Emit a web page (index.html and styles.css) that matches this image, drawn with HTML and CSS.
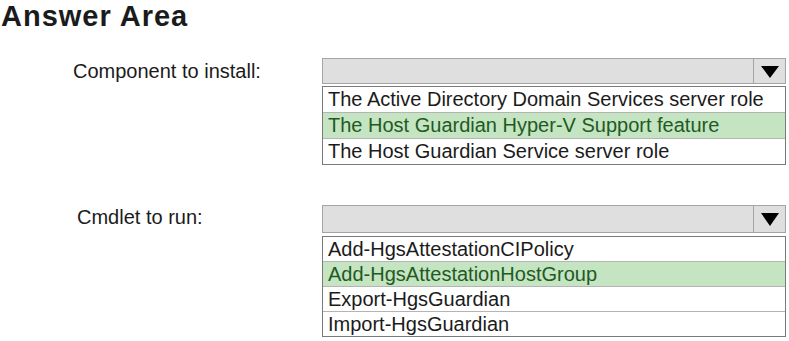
FILE: index.html
```html
<!DOCTYPE html>
<html lang="en">
<head>
<meta charset="UTF-8">
<meta name="viewport" content="width=device-width, initial-scale=1.0">
<title>Answer Area</title>
<link rel="stylesheet" href="styles.css">
</head>
<body>
    <h1 class="title">Answer Area</h1>

    <div class="question">
        <div class="label">Component to install:</div>
        <div class="dropdown">
            <div class="dropdown-head">
                <div class="dropdown-value"></div>
                <div class="dropdown-arrow"><span class="triangle"></span></div>
            </div>
            <ul class="dropdown-list">
                <li class="option">The Active Directory Domain Services server role</li>
                <li class="option option-selected">The Host Guardian Hyper-V Support feature</li>
                <li class="option">The Host Guardian Service server role</li>
            </ul>
        </div>
    </div>

    <div class="question question-second">
        <div class="label label-second">Cmdlet to run:</div>
        <div class="dropdown">
            <div class="dropdown-head dropdown-head-tall">
                <div class="dropdown-value"></div>
                <div class="dropdown-arrow"><span class="triangle"></span></div>
            </div>
            <ul class="dropdown-list dropdown-list-compact">
                <li class="option">Add-HgsAttestationCIPolicy</li>
                <li class="option option-selected">Add-HgsAttestationHostGroup</li>
                <li class="option">Export-HgsGuardian</li>
                <li class="option">Import-HgsGuardian</li>
            </ul>
        </div>
    </div>
</body>
</html>
```

FILE: styles.css
```css
:root {
    --text-color: #1b1b1b;
    --head-bg: #dfdfdf;
    --head-border: #a4a4a4;
    --list-border: #7a7a7a;
    --row-line: #b4b4b4;
    --selected-bg: #c4e4c2;
    --selected-text: #1f5a24;
}

body {
    margin: 0;
    padding: 0;
    background-color: white;
    color: var(--text-color);
    font-family: "Liberation Sans", Arial, sans-serif;
}

.title {
    margin: 0 0 26px 0;
    padding-left: 1px;
    font-size: 29px;
    line-height: 32px;
    font-weight: bold;
    letter-spacing: 1px;
}

.question {
    display: grid;
    grid-template-columns: 249px 464px;
    padding-left: 73px;
}

.question-second {
    margin-top: 40px;
}

.label {
    font-size: 20px;
    line-height: 26px;
}

.label-second {
    padding-left: 4px;
    line-height: 25px;
}

.dropdown-head {
    display: flex;
    height: 26px;
    box-sizing: border-box;
    border: 1px solid var(--head-border);
    background-color: var(--head-bg);
}

.dropdown-head-tall {
    height: 28px;
}

.dropdown-value {
    flex: 1;
}

.dropdown-arrow {
    width: 31px;
    display: flex;
    align-items: center;
    justify-content: center;
    border-left: 1px solid var(--head-border);
}

.triangle {
    width: 0;
    height: 0;
    border-left: 9px solid transparent;
    border-right: 9px solid transparent;
    border-top: 12px solid black;
    margin-top: 1px;
}

.dropdown-head-tall .triangle {
    border-top-width: 13px;
}

.dropdown-list {
    list-style: none;
    margin: 2px 0 0 0;
    padding: 0;
    border: 1px solid var(--list-border);
}

.dropdown-list-compact {
    margin-top: 3px;
}

.option {
    height: 25px;
    padding-left: 5px;
    font-size: 20px;
    line-height: 25px;
    white-space: nowrap;
    border-bottom: 1px solid var(--row-line);
}

.dropdown-list-compact .option {
    height: 24px;
    line-height: 24px;
}

.option:last-child {
    border-bottom: none;
}

.option-selected {
    background-color: var(--selected-bg);
    color: var(--selected-text);
}
```
